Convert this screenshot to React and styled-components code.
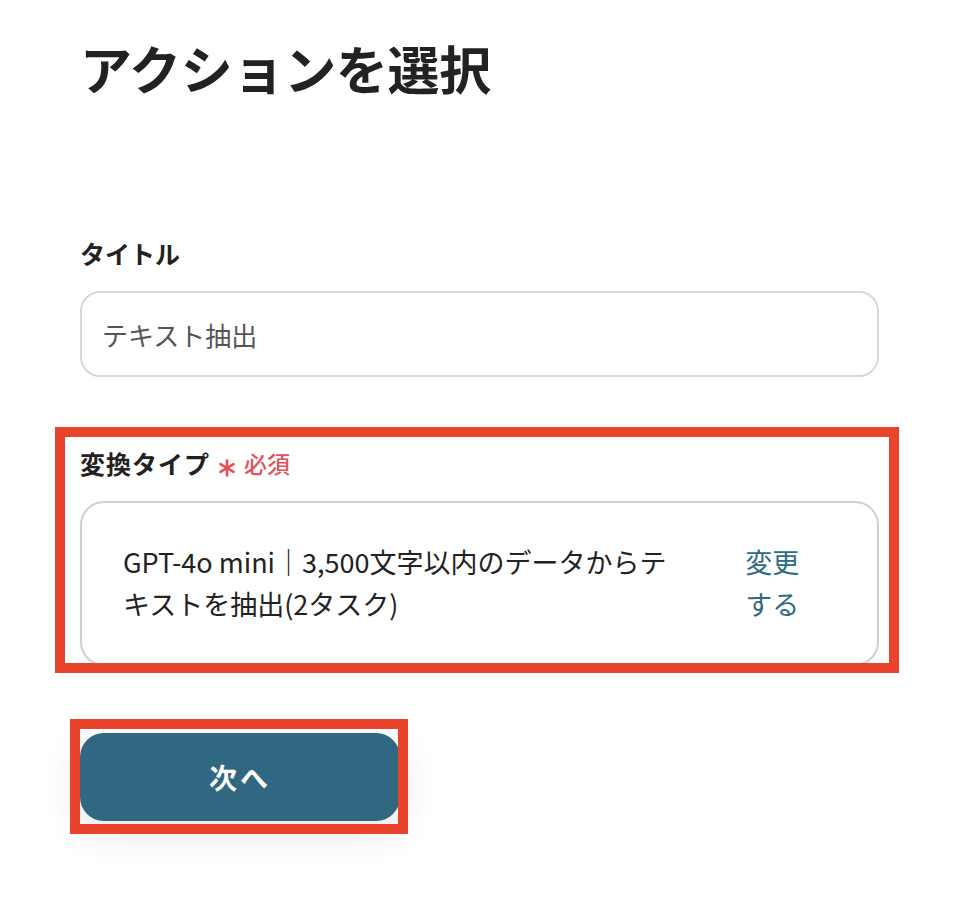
import React from "react";
import styled, { createGlobalStyle } from "styled-components";

const GlobalStyle = createGlobalStyle`
  body {
    margin: 0;
    background: #ffffff;
    font-family: "Noto Sans CJK JP", "Noto Sans", sans-serif;
    color: #222222;
  }
`;

const Page = styled.div`
  padding: 31px 75px 60px 80px;
`;

const Title = styled.h1`
  margin: 0;
  font-size: 52px;
  line-height: 73px;
  font-weight: 700;
  color: #222222;
  letter-spacing: -0.3px;
`;

const Field = styled.div`
  position: relative;
  margin-top: ${(p) => p.$top}px;
`;

const Highlight = styled.div`
  position: absolute;
  top: ${(p) => p.$inset[0]}px;
  right: ${(p) => p.$inset[1]}px;
  bottom: ${(p) => p.$inset[2]}px;
  left: ${(p) => p.$inset[3]}px;
  border: 10px solid #e9432b;
  pointer-events: none;
`;

const Label = styled.div`
  display: flex;
  align-items: center;
  font-size: 25px;
  line-height: 36px;
  font-weight: 700;
  color: #222222;
  margin-bottom: 20px;
  letter-spacing: ${(p) => p.$spacing || 0}px;
`;

const Required = styled.span`
  display: flex;
  align-items: center;
  gap: 8px;
  margin-left: 8px;
  color: #e5505a;
  font-size: 23px;
  font-weight: 500;
  letter-spacing: 0;

  > svg {
    transform: translateY(5px);
  }
`;

const Input = styled.div`
  box-sizing: border-box;
  height: 86px;
  border: 2px solid #d6d9dd;
  border-radius: 20px;
  padding: 0 20px;
  display: flex;
  align-items: center;
  font-size: 26px;
  color: #555555;
`;

const Select = styled.div`
  box-sizing: border-box;
  border: 2px solid #d0d0d0;
  border-radius: 24px;
  padding: 38px 75px 39px 41px;
  display: flex;
  align-items: center;
  gap: 34px;
  font-size: 27px;
  line-height: 42px;
  color: #222222;

  > .text {
    flex: 1;
  }
`;

const ChangeLink = styled.span`
  flex: 0 0 auto;
  width: 2.1em;
  color: #2f6b85;
`;

const ButtonWrap = styled.div`
  position: relative;
  width: 320px;
  margin-top: 67px;
`;

const NextButton = styled.button`
  display: block;
  width: 100%;
  height: 88px;
  border: none;
  border-radius: 24px;
  background: #2f6880;
  color: #ffffff;
  font-family: inherit;
  font-size: 28px;
  font-weight: 700;
  letter-spacing: 3px;
  box-shadow: 0 10px 36px rgba(40, 50, 60, 0.14);
`;

const Asterisk = () => (
  <svg width="18" height="18" viewBox="0 0 18 18" aria-hidden="true">
    <g stroke="#e5505a" strokeWidth="2.6" strokeLinecap="round">
      <line x1="9" y1="1.5" x2="9" y2="16.5" />
      <line x1="2.5" y1="5.2" x2="15.5" y2="12.8" />
      <line x1="2.5" y1="12.8" x2="15.5" y2="5.2" />
    </g>
  </svg>
);

export default function App() {
  return (
    <>
      <GlobalStyle />
      <Page>
        <Title>アクションを選択</Title>

        <Field $top={131}>
          <Label>タイトル</Label>
          <Input>テキスト抽出</Input>
        </Field>

        <Field $top={68}>
          <Label $spacing={1}>
            変換タイプ
            <Required>
              <Asterisk />
              必須
            </Required>
          </Label>
          <Select>
            <span className="text">
              GPT-4o mini｜3,500文字以内のデータからテ
              <br />
              キストを抽出(2タスク)
            </span>
            <ChangeLink>変更する</ChangeLink>
          </Select>
          <Highlight $inset={[-18, -20, -7, -25]} />
        </Field>

        <ButtonWrap>
          <NextButton>次へ</NextButton>
          <Highlight $inset={[-14, -8, -13, -10]} />
        </ButtonWrap>
      </Page>
    </>
  );
}
